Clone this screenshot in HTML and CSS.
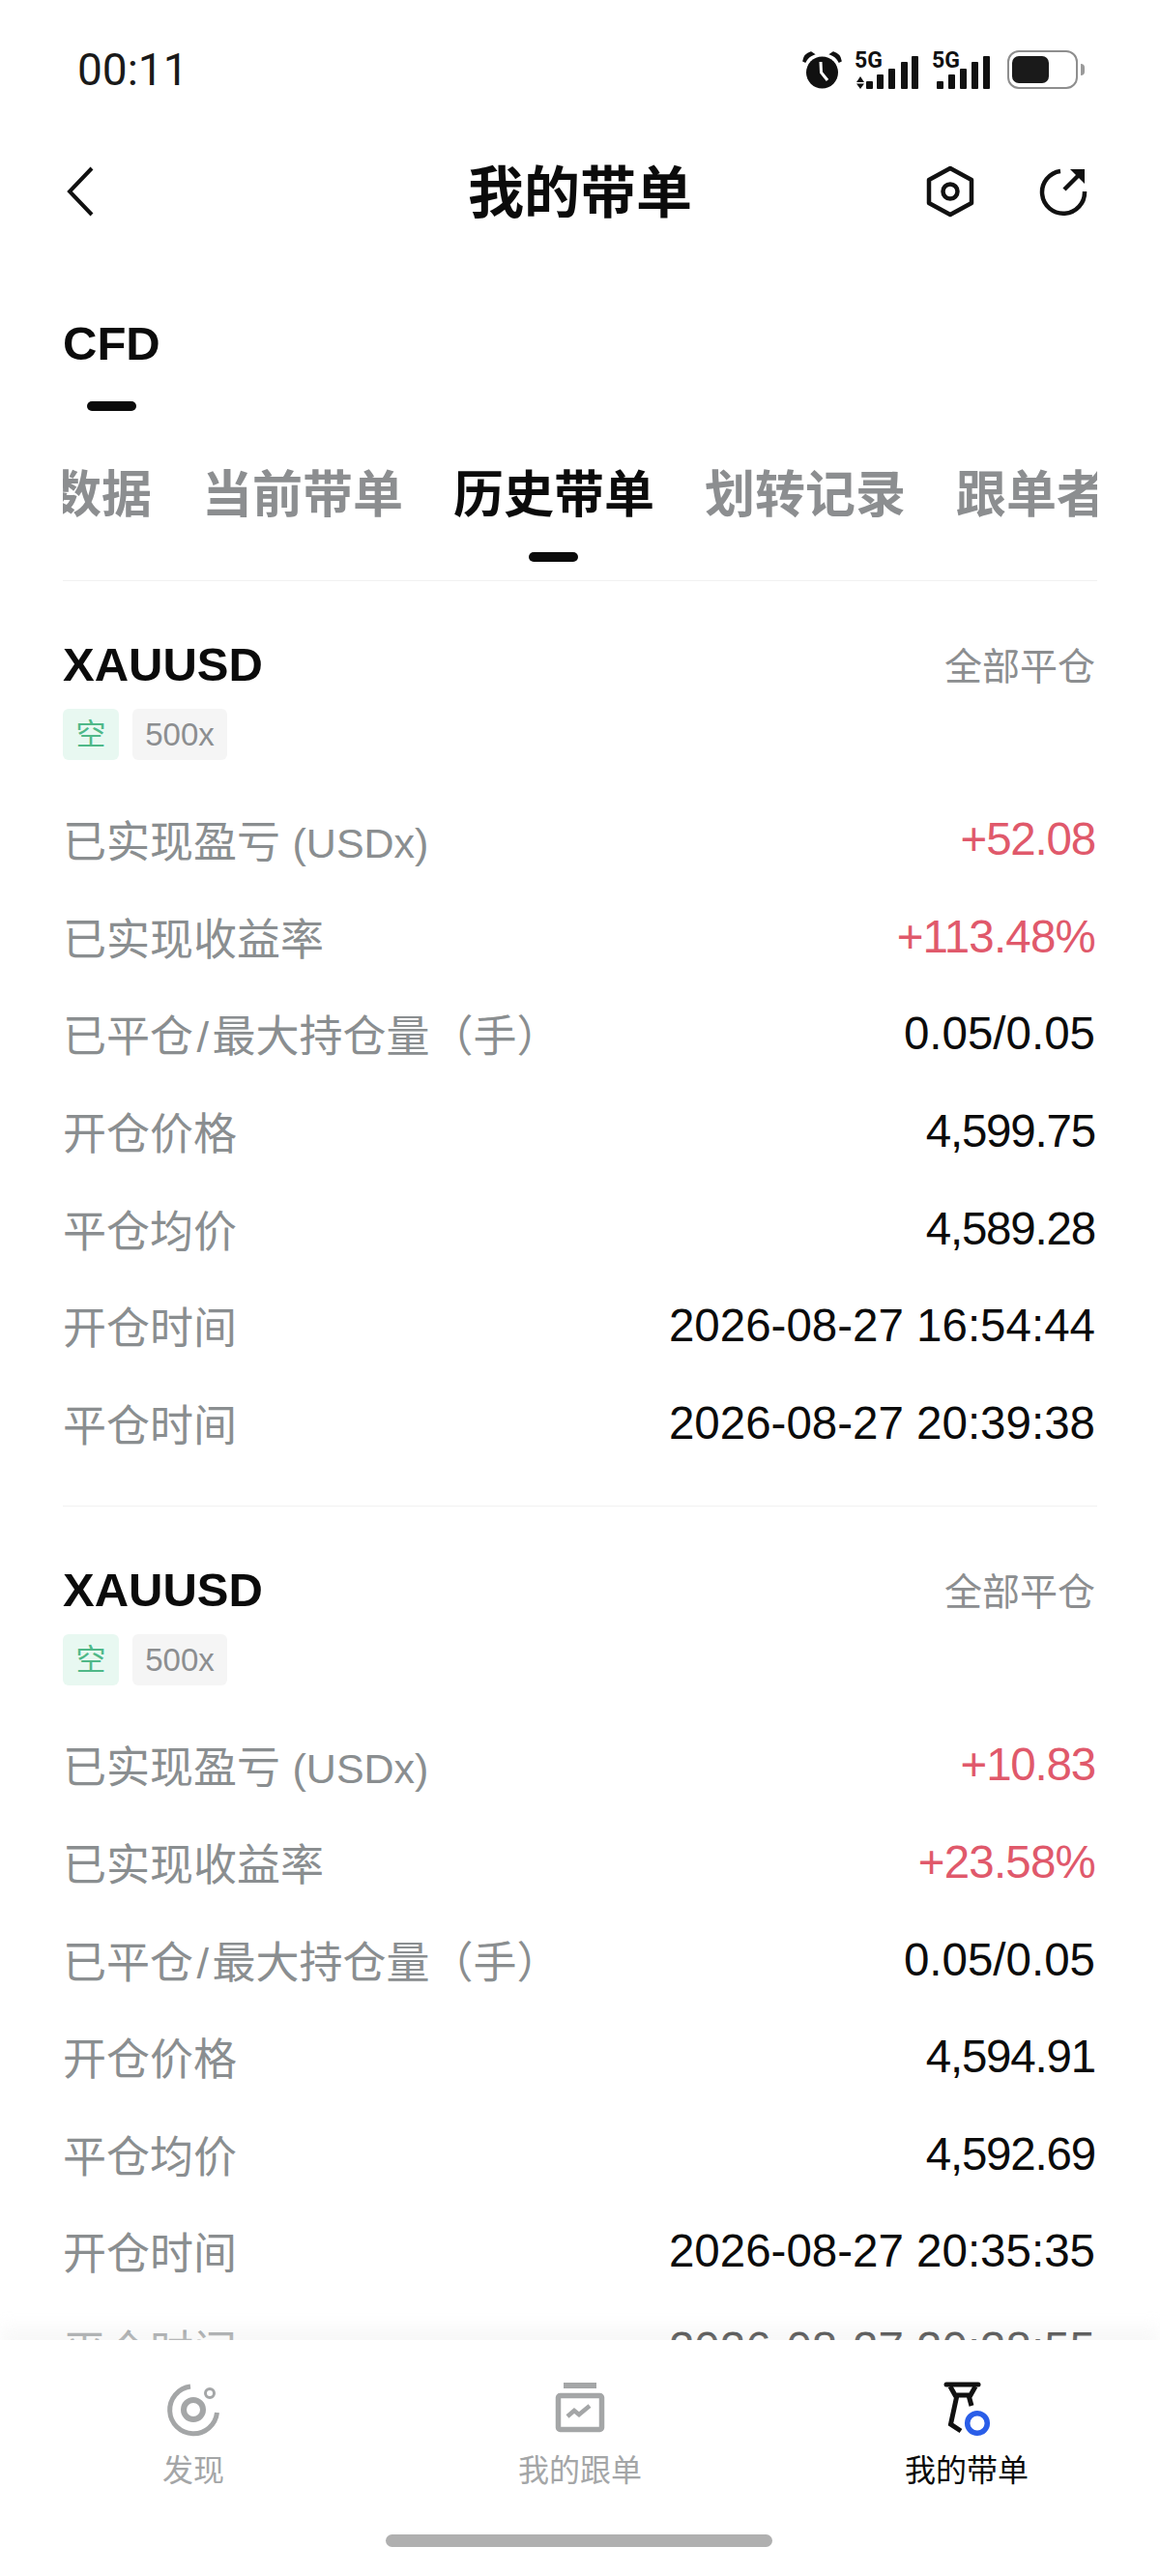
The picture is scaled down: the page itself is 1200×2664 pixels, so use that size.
FILE: index.html
```html
<!DOCTYPE html>
<html lang="zh-CN">
<head>
    <meta charset="UTF-8">
    <title>我的带单</title>
    <link rel="stylesheet" href="styles.css">
</head>
<body>
    <div class="phone">
        <!-- Status bar -->
        <div class="status-bar">
            <span class="time">00:11</span>
            <div class="status-icons">
                <svg class="alarm" width="41" height="39" viewBox="0 0 41 39">
                    <circle cx="20.5" cy="22" r="16.5" fill="#111"/>
                    <path d="M1 10 Q2 3 9 1 L12 3 Q6 5 3 11Z M40 10 Q39 3 32 1 L29 3 Q35 5 38 11Z" fill="#111" stroke="#111" stroke-width="1.5"/>
                    <path d="M19 11 L19.5 22 L26 30" fill="none" stroke="#fff" stroke-width="3"/>
                </svg>
                <div class="net net-first">
                    <span class="net-label">5G</span>
                    <svg width="66" height="38" viewBox="0 0 66 38">
                        <path d="M6 25 L10 31 H2Z M6 38 L10 32.5 H2Z" fill="#111"/>
                        <rect x="12" y="30" width="7" height="8" rx="1" fill="#111"/>
                        <rect x="23" y="23" width="7" height="15" rx="1" fill="#111"/>
                        <rect x="35" y="17" width="7" height="21" rx="1" fill="#111"/>
                        <rect x="48" y="10" width="7" height="28" rx="1" fill="#111"/>
                        <rect x="59" y="4" width="7" height="34" rx="1" fill="#111"/>
                    </svg>
                </div>
                <div class="net">
                    <span class="net-label">5G</span>
                    <svg width="60" height="38" viewBox="0 0 60 38">
                        <rect x="5" y="30" width="7" height="8" rx="1" fill="#111"/>
                        <rect x="17" y="23" width="7" height="15" rx="1" fill="#111"/>
                        <rect x="29" y="17" width="7" height="21" rx="1" fill="#111"/>
                        <rect x="41" y="10" width="7" height="28" rx="1" fill="#111"/>
                        <rect x="53" y="4" width="7" height="34" rx="1" fill="#111"/>
                    </svg>
                </div>
                <div class="battery">
                    <div class="battery-body"><div class="battery-fill"></div></div>
                    <div class="battery-tip"></div>
                </div>
            </div>
        </div>

        <!-- Nav -->
        <div class="nav">
            <svg class="back" width="34" height="52" viewBox="0 0 34 52">
                <path d="M29 2 L6 26 L29 50" fill="none" stroke="#111" stroke-width="4"/>
            </svg>
            <h1>我的带单</h1>
            <div class="nav-actions">
                <svg width="50" height="56" viewBox="0 0 50 56">
                    <path d="M25 4 L47 16 V40 L25 52 L3 40 V16Z" fill="none" stroke="#111" stroke-width="4.5" stroke-linejoin="round"/>
                    <circle cx="25" cy="28" r="7.5" fill="none" stroke="#111" stroke-width="4.5"/>
                </svg>
                <svg width="52" height="52" viewBox="0 0 52 52">
                    <path d="M22 5 A 22 22 0 1 0 47 26" fill="none" stroke="#111" stroke-width="4.5"/>
                    <path d="M26 24 L43 7" fill="none" stroke="#111" stroke-width="4.5"/>
                    <path d="M32 3 H47 V18Z" fill="#111"/>
                </svg>
            </div>
        </div>

        <!-- CFD -->
        <div class="section-tab">
            <span>CFD</span>
            <i class="indicator"></i>
        </div>

        <!-- Tabs -->
        <div class="tabs">
            <div class="tabs-inner">
                <div class="tab">数据</div>
                <div class="tab">当前带单</div>
                <div class="tab active">历史带单<i class="indicator"></i></div>
                <div class="tab">划转记录</div>
                <div class="tab">跟单者</div>
            </div>
        </div>

        <!-- Order cards -->
        <div class="card">
            <div class="card-head">
                <span class="symbol">XAUUSD</span>
                <span class="close-type">全部平仓</span>
            </div>
            <div class="tags">
                <span class="tag short">空</span>
                <span class="tag lever">500x</span>
            </div>
            <div class="row"><span>已实现盈亏 <em>(USDx)</em></span><b class="up">+52.08</b></div>
            <div class="row"><span>已实现收益率</span><b class="up pct">+113.48%</b></div>
            <div class="row"><span>已平仓<em class="slash">/</em>最大持仓量（手）</span><b class="wide">0.05/0.05</b></div>
            <div class="row"><span>开仓价格</span><b>4,599.75</b></div>
            <div class="row"><span>平仓均价</span><b>4,589.28</b></div>
            <div class="row"><span>开仓时间</span><b class="wide">2026-08-27 16:54:44</b></div>
            <div class="row"><span>平仓时间</span><b class="wide">2026-08-27 20:39:38</b></div>
        </div>
        <div class="card">
            <div class="card-head">
                <span class="symbol">XAUUSD</span>
                <span class="close-type">全部平仓</span>
            </div>
            <div class="tags">
                <span class="tag short">空</span>
                <span class="tag lever">500x</span>
            </div>
            <div class="row"><span>已实现盈亏 <em>(USDx)</em></span><b class="up">+10.83</b></div>
            <div class="row"><span>已实现收益率</span><b class="up pct">+23.58%</b></div>
            <div class="row"><span>已平仓<em class="slash">/</em>最大持仓量（手）</span><b class="wide">0.05/0.05</b></div>
            <div class="row"><span>开仓价格</span><b>4,594.91</b></div>
            <div class="row"><span>平仓均价</span><b>4,592.69</b></div>
            <div class="row"><span>开仓时间</span><b class="wide">2026-08-27 20:35:35</b></div>
            <div class="row"><span>平仓时间</span><b class="wide">2026-08-27 20:38:55</b></div>
        </div>

        <!-- Bottom bar -->
        <div class="bottom-bar">
            <div class="bottom-tabs">
                <div class="bottom-tab">
                    <svg width="60" height="60" viewBox="0 0 60 60">
                        <path d="M27 6 A 24.5 24.5 0 1 0 54.5 33" fill="none" stroke="#a4a6a7" stroke-width="5"/>
                        <circle cx="30" cy="30" r="10" fill="none" stroke="#a4a6a7" stroke-width="6"/>
                        <circle cx="47" cy="13" r="4.5" fill="none" stroke="#a4a6a7" stroke-width="3"/>
                    </svg>
                    <span>发现</span>
                </div>
                <div class="bottom-tab">
                    <svg width="60" height="60" viewBox="0 0 60 60">
                        <rect x="13" y="2" width="34" height="6" fill="#a4a6a7"/>
                        <rect x="7.5" y="15.5" width="45" height="35" rx="2" fill="none" stroke="#a4a6a7" stroke-width="5.5"/>
                        <path d="M17 37 L24 31 L29 35 L40 26" fill="none" stroke="#a4a6a7" stroke-width="4.5"/>
                    </svg>
                    <span>我的跟单</span>
                </div>
                <div class="bottom-tab active">
                    <svg width="60" height="60" viewBox="0 0 60 60">
                        <path d="M9 4 H42" fill="none" stroke="#111" stroke-width="5" stroke-linecap="round"/>
                        <path d="M13 6 L18 15 H34 L39 6 M20 15 L13.5 45 L24 52 M32 15 L35 26" fill="none" stroke="#111" stroke-width="5"/>
                        <circle cx="41" cy="44" r="10.3" fill="none" stroke="#2a5ee8" stroke-width="5.5"/>
                    </svg>
                    <span>我的带单</span>
                </div>
            </div>
            <div class="home-indicator"></div>
        </div>
    </div>
</body>
</html>
```
FILE: styles.css
```css
/* Global Styles */
body {
    margin: 0;
    background-color: #fff;
    font-family: "Liberation Sans", "Noto Sans CJK SC", sans-serif;
    color: #0b0b0b;
}

.phone {
    position: relative;
    width: 1200px;
    height: 2664px;
    overflow: hidden;
}

/* Status bar */
.status-bar {
    height: 144px;
    padding: 0 78px 0 80px;
    display: flex;
    align-items: center;
    justify-content: space-between;
}

.time {
    font-family: Roboto, sans-serif;
    font-size: 46px;
    color: #1a1a1a;
}

.status-icons {
    display: flex;
    align-items: flex-end;
}

.alarm {
    margin-right: 13px;
}

.net {
    position: relative;
    width: 72px;
    height: 38px;
}

.net-first {
    width: 80px;
}

.net svg {
    position: absolute;
    left: 0;
    bottom: 0;
}

.net-label {
    position: absolute;
    left: 0;
    top: -3px;
    font-family: Roboto, sans-serif;
    font-size: 23px;
    font-weight: 700;
    line-height: 24px;
    color: #111;
}

.battery {
    display: flex;
    align-items: center;
    margin-left: 6px;
}

.battery-body {
    box-sizing: border-box;
    width: 73px;
    height: 40px;
    padding: 4px 3px;
    border: 2.5px solid #8e8e8e;
    border-radius: 12px;
}

.battery-fill {
    width: 38px;
    height: 100%;
    background-color: #1a1a1a;
    border-radius: 7px;
}

.battery-tip {
    width: 4px;
    height: 12px;
    margin-left: 3px;
    background-color: #9a9a9a;
    border-radius: 0 4px 4px 0;
}

/* Nav */
.nav {
    position: relative;
    height: 108px;
    padding: 0 73px 0 66px;
    display: flex;
    align-items: center;
    justify-content: space-between;
}

.nav h1 {
    position: absolute;
    left: 0;
    right: 0;
    margin: 0;
    padding-bottom: 6px;
    text-align: center;
    font-size: 58px;
    font-weight: 700;
}

.nav-actions {
    display: flex;
    align-items: center;
    gap: 67px;
}

/* Tabs */
.section-tab {
    padding: 73px 65px 0;
    font-size: 49px;
    font-weight: 700;
    line-height: 60px;
}

.section-tab span {
    display: block;
}

.indicator {
    display: block;
    width: 51px;
    height: 10px;
    background-color: #0b0b0b;
    border-radius: 5px;
}

.section-tab .indicator {
    margin: 30px 0 0 25px;
}

.tabs {
    margin: 57px 65px 0;
    padding-bottom: 19px;
    border-bottom: 1px solid #f1f1f1;
    overflow: hidden;
}

.tabs-inner {
    display: flex;
    gap: 52px;
    margin-left: -12px;
    white-space: nowrap;
}

.tab {
    flex: none;
    font-size: 52px;
    font-weight: 700;
    line-height: 60px;
    color: #8c8e90;
    padding-bottom: 39px;
    position: relative;
}

.tab.active {
    color: #0b0b0b;
}

.tab .indicator {
    position: absolute;
    left: 78px;
    bottom: 0;
}

/* Cards */
.card {
    margin: 0 65px;
    padding: 56px 0 33px;
    border-bottom: 1px solid #f1f1f1;
}

.card-head {
    display: flex;
    align-items: center;
    justify-content: space-between;
    height: 60px;
}

.symbol {
    font-size: 49px;
    font-weight: 700;
}

.close-type {
    margin-right: 2px;
    padding-bottom: 3px;
    font-size: 39px;
    color: #8c8e90;
}

.tags {
    display: flex;
    gap: 14px;
    margin: 16px 0 34px;
}

.tag {
    height: 53px;
    line-height: 53px;
    text-align: center;
    border-radius: 6px;
}

.tag.short {
    width: 58px;
    font-size: 31px;
    color: #4fb888;
    background-color: #e8f8f1;
}

.tag.lever {
    width: 98px;
    font-size: 33px;
    color: #8c8e90;
    background-color: #f5f5f5;
}

.row {
    box-sizing: border-box;
    height: 100.6px;
    padding-bottom: 5px;
    display: flex;
    align-items: center;
    justify-content: space-between;
    font-size: 45px;
    color: #8a8e90;
}

.row em {
    font-style: normal;
    font-size: 43px;
}

.row em.slash {
    padding: 0 3.5px;
    font-size: 45px;
}

.row b {
    margin-right: 2px;
    font-size: 47.5px;
    font-weight: 400;
    letter-spacing: -1.2px;
    color: #0b0b0b;
}

.row b.wide {
    letter-spacing: 0;
}

.row b.up {
    color: #e0596b;
}

.row b.pct {
    letter-spacing: -0.8px;
}

/* Bottom bar */
.bottom-bar {
    position: absolute;
    left: 0;
    right: 0;
    bottom: 0;
    height: 244px;
    background-color: #fff;
    box-shadow: 0 -14px 16px rgba(240, 240, 240, 0.45);
}

.bottom-tabs {
    display: flex;
    padding-top: 42px;
}

.bottom-tab {
    flex: 1;
    display: flex;
    flex-direction: column;
    align-items: center;
    font-size: 32px;
    line-height: 40px;
    color: #a4a6a7;
    gap: 13px;
}

.bottom-tab.active {
    color: #0b0b0b;
}

.home-indicator {
    position: absolute;
    left: 399px;
    bottom: 30px;
    width: 400px;
    height: 13px;
    background-color: #b0b0b0;
    border-radius: 7px;
}
```
